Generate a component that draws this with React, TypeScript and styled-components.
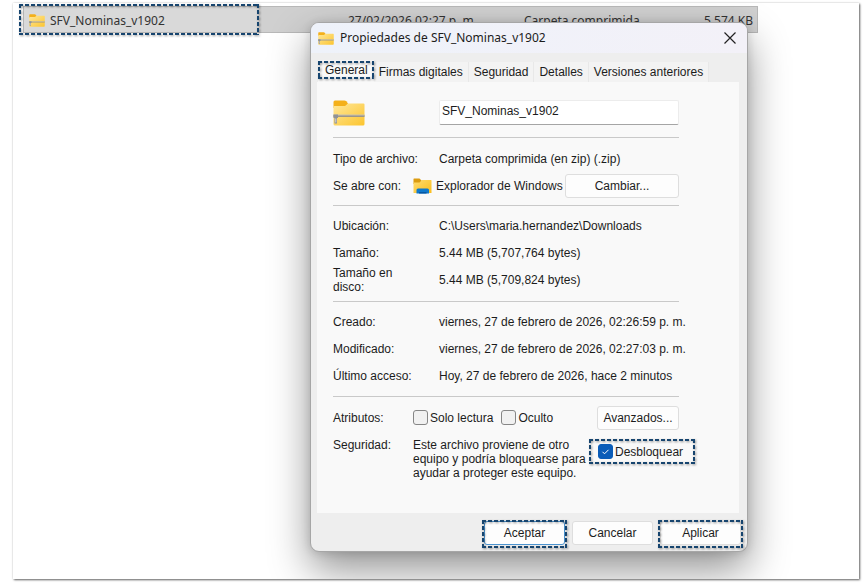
import React from "react";
import styled, { createGlobalStyle, css } from "styled-components";

const GlobalStyle = createGlobalStyle`
  *, *::before, *::after { box-sizing: border-box; }
  html { background: #fff; }
  body {
    margin: 0;
    background: #fff;
    color: #1c1c1c;
    font-family: "Liberation Sans", Arial, sans-serif;
    font-size: 12px;
    line-height: 14px;
  }
  button, input { font: inherit; color: inherit; }
`;

const titleFont = css`
  font-family: "Noto Sans", "Open Sans", sans-serif;
  font-size: 12px;
  line-height: 18px;
`;

const Desktop = styled.main`
  position: relative;
  min-height: calc(100vh - 8px);
  margin: 3px 5px 5px 13px;
  overflow: hidden;
  background: #fff;
  box-shadow: 1px 1px 2px rgba(0, 0, 0, 0.6), 0 0 2px rgba(0, 0, 0, 0.15);
`;

const Page = styled.div`
  display: flow-root;
`;

const marked = css`
  position: relative;
  &::after {
    --across: repeating-linear-gradient(90deg, #17456f 0 4px, transparent 4px 6px);
    --down: repeating-linear-gradient(180deg, #17456f 0 4px, transparent 4px 6px);
    content: "";
    position: absolute;
    inset: var(--mark, -2px);
    background:
      var(--across) top / 100% 2px no-repeat,
      var(--across) bottom / 100% 2px no-repeat,
      var(--down) left / 2px 100% no-repeat,
      var(--down) right / 2px 100% no-repeat;
    filter: drop-shadow(1px 1px 1px rgba(0, 0, 0, 0.4));
    pointer-events: none;
  }
`;

const FileTable = styled.table`
  display: block;
  margin: 3px 101px 0 10px;
`;

const FileBody = styled.tbody`
  display: block;
`;

const FileRow = styled.tr`
  display: grid;
  grid-template-columns: 324px 176px 1fr auto;
  align-items: center;
  height: 27px;
  background: #d0d0d0;
  border: 1px solid #b8b8b8;
`;

const FileCell = styled.td<{ $align?: string }>`
  padding: 2px 4px 0 0;
  text-align: ${(p) => p.$align ?? "left"};
  white-space: nowrap;
  color: #333;
  ${titleFont}
`;

const NameCell = styled(FileCell)`
  display: flex;
  align-items: center;
  gap: 5px;
  width: 235px;
  height: 25px;
  padding-left: 5px;
  background: #d9d9d9;
  --mark: -3px 0 -3px -5px;
  ${marked}
`;

const Dialog = styled.section`
  position: absolute;
  top: 19px;
  left: 297px;
  right: 111px;
  background: #eeeeee;
  border: 1px solid #a6a6a6;
  border-radius: 9px;
  box-shadow: 0 18px 40px rgba(0, 0, 0, 0.42), 0 1px 10px rgba(0, 0, 0, 0.14);
`;

const TitleBar = styled.header`
  display: flex;
  align-items: center;
  gap: 6px;
  height: 30px;
  padding: 0 11px 0 7px;
  border-radius: 8px 8px 0 0;
  background: linear-gradient(90deg, #eef2fa, #f3f1f8);
`;

const Title = styled.h1`
  flex: 1;
  margin: 0;
  font-weight: 400;
  ${titleFont}
`;

const CloseButton = styled.button`
  display: grid;
  place-items: center;
  width: 12px;
  height: 16px;
  padding: 0;
  border: 0;
  background: none;
`;

const Tabs = styled.div`
  display: flex;
  align-items: flex-end;
  margin: 7px 7px 0;
`;

const Tab = styled.button<{ $active?: boolean }>`
  height: 20px;
  padding: 0 5px;
  border: 0;
  border-right: 1px solid #e8e8e8;
  background: #f3f3f3;
  white-space: nowrap;
  ${(p) =>
    p.$active &&
    css`
      height: 22px;
      padding: 0 6px 2px 7px;
      border: 0;
      background: #f9f9f9;
      --mark: 1px 0 3px 0;
      ${marked}
    `}
`;

const Panel = styled.div`
  margin: 0 8px 0 6px;
  padding: 17px 60px 26px 16px;
  background: #f9f9f9;
`;

const Row = styled.div<{ $height?: number; $wide?: boolean; $top?: boolean }>`
  display: grid;
  grid-template-columns: ${(p) => (p.$wide ? "80px" : "106px")} minmax(0, 1fr) auto;
  align-items: ${(p) => (p.$top ? "start" : "center")};
  min-height: ${(p) => p.$height ?? 27}px;
`;

const NameRow = styled(Row)`
  margin-bottom: 11px;
`;

const SecurityRow = styled(Row)`
  grid-template-columns: 80px minmax(0, 1fr) 82px;
  padding-top: 6px;
`;

const Label = styled.span<{ $narrow?: boolean }>`
  ${(p) => p.$narrow && "padding-right: 30px;"}
`;

const Value = styled.span`
  white-space: nowrap;
`;

const Divider = styled.hr`
  height: 1px;
  margin: 0;
  border: 0;
  background: #c9c9c9;
`;

const Group = styled.div`
  padding: 6px 0 7px;
`;

const TypeGroup = styled(Group)`
  padding: 7px 0 6px;
`;

const NameInput = styled.input`
  grid-column: 2 / 4;
  width: 100%;
  height: 25px;
  padding: 0 2px 4px;
  border: 1px solid #ececec;
  border-bottom-color: #a5a5a5;
  border-radius: 2px;
  background: #fff;
  outline: 0;
`;

const Opener = styled.span`
  display: flex;
  align-items: center;
  gap: 4px;
  white-space: nowrap;
`;

const PushButton = styled.button<{ $width: number; $accent?: boolean; $marked?: boolean }>`
  width: ${(p) => p.$width}px;
  height: 24px;
  padding: 0;
  border: 1px solid ${(p) => (p.$accent ? "#4b93cf" : "#dedede")};
  border-radius: 3px;
  background: #fdfdfd;
  white-space: nowrap;
  --mark: -2px -3px -4px -3px;
  ${(p) => p.$marked && marked}
`;

const Checks = styled.span`
  display: flex;
  gap: 8px;
`;

const CheckLabel = styled.label<{ $marked?: boolean }>`
  display: flex;
  align-items: center;
  gap: 2px;
  white-space: nowrap;
  --mark: -5px -12px -5px -9px;
  ${(p) => p.$marked && marked}
`;

const CheckBox = styled.input`
  appearance: none;
  flex: none;
  width: 15px;
  height: 15px;
  margin: 0;
  border: 1px solid #868686;
  border-radius: 3px;
  background: #f1f1f1;
  &:checked {
    border-color: #0a5cb8;
    background: #0a5cb8
      url("data:image/svg+xml,%3Csvg xmlns='http://www.w3.org/2000/svg' viewBox='0 0 13 13'%3E%3Cpath d='M3.5 6.8l2 2 4-4' fill='none' stroke='white'/%3E%3C/svg%3E")
      center / 13px 13px no-repeat;
  }
`;

const Unblock = styled.span`
  display: flex;
  padding: 6px 0 0 1px;
`;

const Footer = styled.footer`
  display: flex;
  justify-content: flex-end;
  gap: 7px;
  padding: 8px 6px 6px;
`;

function ZipIcon({ width, height }: { width: number; height: number }) {
  return (
    <svg width={width} height={height} viewBox="0 0 32 26" preserveAspectRatio="none" aria-hidden="true">
      <defs>
        <linearGradient id="zipBody" x1="0" y1="0" x2="1" y2="1">
          <stop offset="0" stopColor="#ffe799" />
          <stop offset="1" stopColor="#fcc52f" />
        </linearGradient>
      </defs>
      <path d="M.5 2q0-1.500 1.500-1.500h9.500q1 0 1.800.8L15 3.500 12 8H.5z" fill="#f4b01a" />
      <path d="M.5 7q0-1 1-1h10.500l3-2.500h15.500q1 0 1 1V24q0 1.500-1.500 1.500H2Q.5 25.500.5 24z" fill="url(#zipBody)" />
      <path d="M.5 15h31v2H.5z" fill="#9c968a" />
      <path d="M.5 14.500h31v1H.5z" fill="#c9c2b2" />
      <path d="M.5 14.500H5v3.500H4v5.500H1.500V18h-1z" fill="#909295" />
      <path d="M2.300 18.500h1v4h-1z" fill="#d8d8d8" />
    </svg>
  );
}

function ExplorerIcon() {
  return (
    <svg width="19" height="16" viewBox="0 0 19 16" aria-hidden="true">
      <defs>
        <linearGradient id="explorerBody" x1="0" y1="0" x2="1" y2="1">
          <stop offset="0" stopColor="#ffdc70" />
          <stop offset="1" stopColor="#fbbd1c" />
        </linearGradient>
      </defs>
      <path d="M.5 1q0-.5.5-.5h5.500L8.500 2.500V6h-8z" fill="#dc9c10" />
      <path d="M.5 4.500h6L9 2h9q.5 0 .5.5V15H.5z" fill="url(#explorerBody)" />
      <path d="M3.500 15.500V12q0-1.500 1.500-1.500h9.500q1.500 0 1.500 1.500v3.500z" fill="#0f79cc" />
      <path d="M6 15.500v-1.500h7.500v1.500z" fill="#0757a3" />
    </svg>
  );
}

const otherTabs = ["Firmas digitales", "Seguridad", "Detalles", "Versiones anteriores"];

export default function App() {
  return (
    <Page>
      <GlobalStyle />
      <Desktop>
        <FileTable>
          <FileBody>
            <FileRow>
              <NameCell>
                <ZipIcon width={16} height={13} />
                SFV_Nominas_v1902
              </NameCell>
              <FileCell>27/02/2026 02:27 p. m.</FileCell>
              <FileCell>Carpeta comprimida</FileCell>
              <FileCell $align="right">5,574 KB</FileCell>
            </FileRow>
          </FileBody>
        </FileTable>

        <Dialog role="dialog" aria-labelledby="dialog-title">
          <TitleBar>
            <ZipIcon width={16} height={13} />
            <Title id="dialog-title">Propiedades de SFV_Nominas_v1902</Title>
            <CloseButton aria-label="Cerrar">
              <svg width="12" height="12" viewBox="0 0 12 12" aria-hidden="true">
                <path d="M.5.5l11 11M11.500.5l-11 11" stroke="#222" strokeWidth="1.200" />
              </svg>
            </CloseButton>
          </TitleBar>
          <Tabs role="tablist">
            <Tab role="tab" aria-selected="true" $active>
              General
            </Tab>
            {otherTabs.map((name) => (
              <Tab role="tab" aria-selected="false" key={name}>
                {name}
              </Tab>
            ))}
          </Tabs>
          <Panel role="tabpanel">
            <NameRow>
              <ZipIcon width={32} height={26} />
              <NameInput aria-label="Nombre" defaultValue="SFV_Nominas_v1902" />
            </NameRow>
            <Divider />
            <TypeGroup>
              <Row>
                <Label>Tipo de archivo:</Label>
                <Value>Carpeta comprimida (en zip) (.zip)</Value>
              </Row>
              <Row $wide>
                <Label>Se abre con:</Label>
                <Opener>
                  <ExplorerIcon />
                  Explorador de Windows
                </Opener>
                <PushButton $width={114}>Cambiar...</PushButton>
              </Row>
            </TypeGroup>
            <Divider />
            <Group>
              <Row>
                <Label>Ubicación:</Label>
                <Value>C:\Users\maria.hernandez\Downloads</Value>
              </Row>
              <Row>
                <Label>Tamaño:</Label>
                <Value>5.44 MB (5,707,764 bytes)</Value>
              </Row>
              <Row>
                <Label $narrow>Tamaño en disco:</Label>
                <Value>5.44 MB (5,709,824 bytes)</Value>
              </Row>
            </Group>
            <Divider />
            <Group>
              <Row>
                <Label>Creado:</Label>
                <Value>viernes, 27 de febrero de 2026, 02:26:59 p. m.</Value>
              </Row>
              <Row>
                <Label>Modificado:</Label>
                <Value>viernes, 27 de febrero de 2026, 02:27:03 p. m.</Value>
              </Row>
              <Row>
                <Label>Último acceso:</Label>
                <Value>Hoy, 27 de febrero de 2026, hace 2 minutos</Value>
              </Row>
            </Group>
            <Divider />
            <Group>
              <Row $wide $height={29}>
                <Label>Atributos:</Label>
                <Checks>
                  <CheckLabel>
                    <CheckBox type="checkbox" />
                    Solo lectura
                  </CheckLabel>
                  <CheckLabel>
                    <CheckBox type="checkbox" />
                    Oculto
                  </CheckLabel>
                </Checks>
                <PushButton $width={82}>Avanzados...</PushButton>
              </Row>
              <SecurityRow $top>
                <Label>Seguridad:</Label>
                <span>Este archivo proviene de otro equipo y podría bloquearse para ayudar a proteger este equipo.</span>
                <Unblock>
                  <CheckLabel $marked>
                    <CheckBox type="checkbox" defaultChecked />
                    Desbloquear
                  </CheckLabel>
                </Unblock>
              </SecurityRow>
            </Group>
          </Panel>
          <Footer>
            <PushButton $width={81} $accent $marked>
              Aceptar
            </PushButton>
            <PushButton $width={81}>Cancelar</PushButton>
            <PushButton $width={81} $marked>
              Aplicar
            </PushButton>
          </Footer>
        </Dialog>
      </Desktop>
    </Page>
  );
}
